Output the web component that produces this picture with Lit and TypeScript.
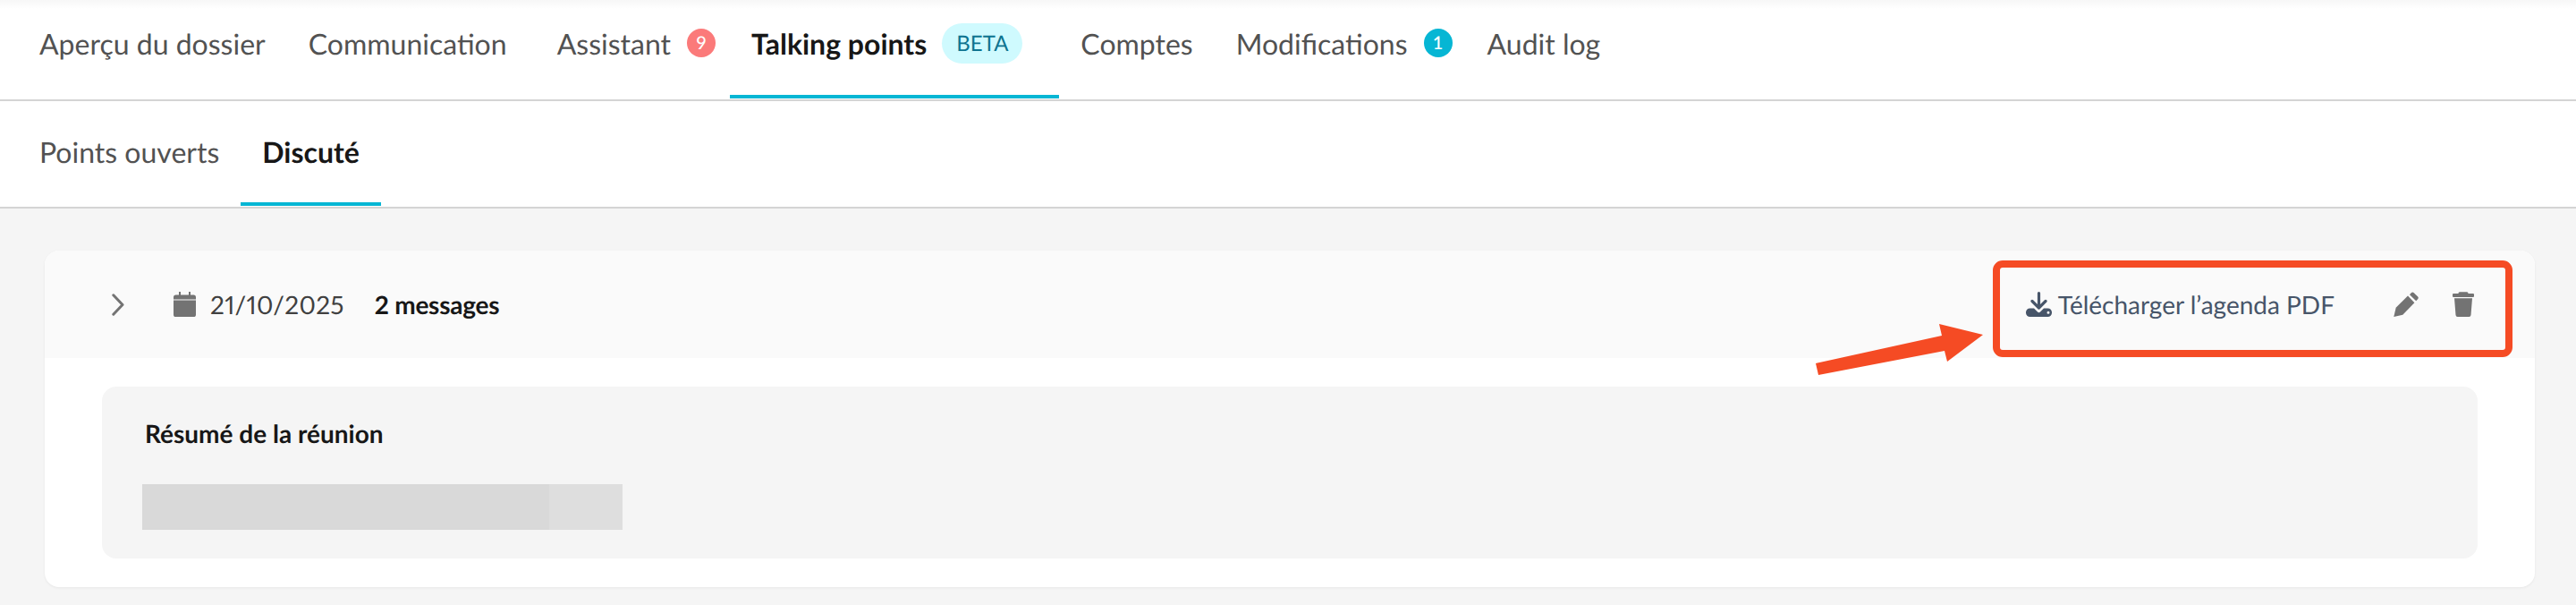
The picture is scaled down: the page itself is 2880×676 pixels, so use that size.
import { LitElement, html, css } from "lit";
import { customElement } from "lit/decorators.js";

@customElement("app-root")
export class AppRoot extends LitElement {
  static styles = css`
    :host {
      display: block;
      position: relative;
      width: 2880px;
      height: 676px;
      overflow: hidden;
      background: #f5f5f5;
      font-family: "Lato", sans-serif;
      color: #525252;
      text-rendering: geometricPrecision;
    }
    .nav {
      box-sizing: border-box;
      height: 113px;
      display: flex;
      padding-left: 20px;
      background: linear-gradient(#f7f7f7, #ffffff 10px);
      border-bottom: 2px solid #d4d4d4;
    }
    .subnav {
      box-sizing: border-box;
      height: 120px;
      display: flex;
      padding-left: 21px;
      background: #fff;
      border-bottom: 2px solid #d4d4d4;
    }
    .tab {
      box-sizing: border-box;
      display: flex;
      align-items: center;
      height: 110px;
      padding: 0 24px 10px;
      font-size: 32px;
      white-space: nowrap;
      border-bottom: 4px solid transparent;
    }
    .subnav .tab {
      height: 117px;
      padding-top: 0;
      padding-bottom: 0;
    }
    .subnav .tab:first-child { padding-left: 23px; }
    .tab.active {
      font-weight: 700;
      color: #171717;
      border-bottom-color: #06b6d4;
    }
    .tab.badged { padding-right: 16px; }
    .tab.assistant { padding-left: 32px; }
    .tab.talking { padding-right: 41px; }
    .tab.modifications { padding-right: 15px; }
    .badge {
      width: 32px;
      height: 32px;
      margin-left: 18px;
      border-radius: 50%;
      display: flex;
      align-items: center;
      justify-content: center;
      color: #fff;
      font-size: 20px;
      font-weight: 500;
    }
    .badge.red { background: #fb7a7a; }
    .badge.cyan { background: #06b6d4; }
    .beta {
      box-sizing: border-box;
      width: 90px;
      height: 45px;
      margin-left: 17px;
      border-radius: 23px;
      background: #cffafe;
      color: #0e7490;
      font-size: 24px;
      font-weight: 400;
      display: flex;
      align-items: center;
      justify-content: center;
    }
    .content {
      padding: 47px 46px 0 50px;
    }
    .card {
      box-sizing: border-box;
      height: 376px;
      background: #fff;
      border-radius: 16px;
      box-shadow: 0 1px 3px rgba(0, 0, 0, 0.06);
      overflow: hidden;
    }
    .card-head {
      box-sizing: border-box;
      height: 120px;
      background: #fafafa;
      display: flex;
      align-items: center;
      padding: 0 68px 0 75px;
      font-size: 28px;
      color: #404040;
    }
    .chevron { width: 14px; height: 25px; margin-right: 55px; }
    .calendar { width: 25px; height: 28px; margin-right: 16px; }
    .date { margin-right: 34px; font-variant-numeric: proportional-nums; letter-spacing: 0.3px; }
    .count { font-weight: 700; color: #171717; font-variant-numeric: proportional-nums; letter-spacing: -0.25px; }
    .actions {
      margin-left: auto;
      display: flex;
      align-items: center;
    }
    .download {
      display: flex;
      align-items: center;
      color: #475569;
    }
    .download svg { width: 29px; height: 28px; margin-right: 7px; }
    .pencil { width: 28px; height: 28px; margin-left: 66px; }
    .trash { width: 24px; height: 28px; margin-left: 38px; }
    .card-body { padding: 32px 64px; }
    .summary {
      box-sizing: border-box;
      height: 192px;
      padding: 0 45px;
      background: #f5f5f5;
      border-radius: 16px;
    }
    .summary h3 {
      margin: 0;
      padding: 32px 3px 0;
      height: 76px;
      box-sizing: border-box;
      line-height: 40px;
      font-size: 28px;
      font-weight: 700;
      color: #171717;
    }
    .skeleton {
      margin-top: 33px;
      width: 537px;
      height: 51px;
      display: flex;
    }
    .skeleton .a { width: 455px; background: #d9d9d9; }
    .skeleton .b { flex: 1; background: #dedede; }
    .highlight {
      position: absolute;
      box-sizing: border-box;
      left: 2228px;
      top: 291px;
      width: 581px;
      height: 108px;
      border: 8px solid #f54b24;
      border-radius: 11px;
    }
    .arrow {
      position: absolute;
      left: 2020px;
      top: 355px;
      width: 210px;
      height: 70px;
    }
  `;

  render() {
    return html`
      <div class="nav">
        <div class="tab">Aperçu du dossier</div>
        <div class="tab">Communication</div>
        <div class="tab badged assistant">Assistant<span class="badge red">9</span></div>
        <div class="tab active talking">Talking points<span class="beta">BETA</span></div>
        <div class="tab">Comptes</div>
        <div class="tab badged modifications">Modifications<span class="badge cyan">1</span></div>
        <div class="tab">Audit log</div>
      </div>
      <div class="subnav">
        <div class="tab">Points ouverts</div>
        <div class="tab active">Discuté</div>
      </div>
      <div class="content">
        <div class="card">
          <div class="card-head">
            <svg class="chevron" viewBox="0 0 14 25" fill="none" stroke="#737373" stroke-width="3" stroke-linecap="round" stroke-linejoin="round">
              <path d="M1.8 1.8 L12 12.5 L1.8 23.2" />
            </svg>
            <svg class="calendar" viewBox="0 0 25 28" fill="#737373">
              <path d="M6 0h2v3.6h9V0h2v3.6h3.4a2.6 2.6 0 0 1 2.6 2.6v2.4H0V6.2a2.6 2.6 0 0 1 2.6-2.6H6z" />
              <path d="M0 9.4h25v16a2.6 2.6 0 0 1-2.6 2.6H2.6A2.6 2.6 0 0 1 0 25.400z" />
            </svg>
            <span class="date">21/10/2025</span>
            <span class="count">2 messages</span>
            <div class="actions">
              <div class="download">
                <svg viewBox="0 0 29 28">
                  <path fill="none" stroke="currentColor" stroke-width="3.200" stroke-linecap="round" stroke-linejoin="round" d="M14.500 1.600V17.500M7 10.500l7.500 7.500 7.500-7.500" />
                  <path fill="currentColor" fill-rule="evenodd" d="M4.500 18.500H9l4 4a2.100 2.100 0 0 0 3 0l4-4h4.500A4.500 4.500 0 0 1 29 23v.500A4.500 4.500 0 0 1 24.500 28H4.500A4.500 4.500 0 0 1 0 23.500V23A4.500 4.500 0 0 1 4.500 18.500zM25 21.700a1.500 1.500 0 1 0 0 3 1.500 1.500 0 0 0 0-3z" />
                </svg>
                Télécharger l’agenda PDF
              </div>
              <svg class="pencil" viewBox="0 0 28 28" fill="#737373">
                <path d="M0.300 28 L2.700 17.800 L16 4.400 L23.400 12.200 L10.300 25.700 Z" />
                <path d="M18 3.200 L20 1 Q21.200 -0.100 22.500 1 L27.200 5.400 Q28.300 6.700 27.300 8 L25.200 10.200 Z" />
              </svg>
              <svg class="trash" viewBox="0 0 24 28" fill="#737373">
                <path d="M8 0.300h8a1.500 1.500 0 0 1 1.500 1.700H23a1 1 0 0 1 1 1v2a1 1 0 0 1-1 1H1a1 1 0 0 1-1-1V3a1 1 0 0 1 1-1h5.500A1.500 1.500 0 0 1 8 .300z" />
                <path d="M2 7.200h20l-1.500 18.800a2.200 2.200 0 0 1-2.200 2H5.700a2.200 2.200 0 0 1-2.200-2z" />
              </svg>
            </div>
          </div>
          <div class="card-body">
            <div class="summary">
              <h3>Résumé de la réunion</h3>
              <div class="skeleton"><div class="a"></div><div class="b"></div></div>
            </div>
          </div>
        </div>
      </div>
      <div class="highlight"></div>
      <svg class="arrow" viewBox="0 0 210 70" fill="#f54b24">
        <path d="M10 51 L151 20 L148 7 L197 19 L157 49 L154 37 L13 64 Z" />
      </svg>
    `;
  }
}
